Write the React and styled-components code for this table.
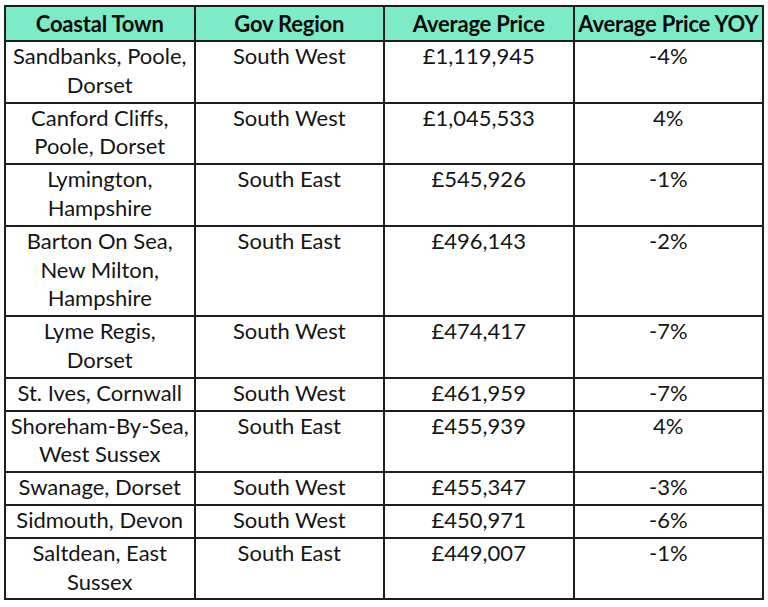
import React from "react";
import styled, { createGlobalStyle } from "styled-components";

const Global = createGlobalStyle`
  html, body { margin: 0; padding: 0; background: #ffffff; }
  body { font-family: "Lato", "Liberation Sans", sans-serif; color: #111; }
`;

const Page = styled.div`
  padding: 5px 0 0 4px;
`;

const Table = styled.table`
  width: 760px;
  table-layout: fixed;
  border-collapse: collapse;
  border: 2px solid #1e1e1e;
  font-family: "Lato", "Liberation Sans", sans-serif;
`;

const HeadCell = styled.th`
  background: #7eebc8;
  border: 2px solid #1e1e1e;
  font-size: 22px;
  font-weight: 700;
  line-height: 29px;
  padding: 2px 0 2px;
  text-align: center;
  white-space: nowrap;
  letter-spacing: -0.2px;
  color: #0c0c0c;
`;

const Cell = styled.td`
  border: 2px solid #1e1e1e;
  font-size: 22px;
  font-weight: 400;
  line-height: 28.8px;
  padding: 0 4px 2px;
  text-align: center;
  vertical-align: top;
  color: #151515;
`;

const rows = [
  ["Sandbanks, Poole, Dorset", "South West", "£1,119,945", "-4%"],
  ["Canford Cliffs, Poole, Dorset", "South West", "£1,045,533", "4%"],
  ["Lymington, Hampshire", "South East", "£545,926", "-1%"],
  ["Barton On Sea, New Milton, Hampshire", "South East", "£496,143", "-2%"],
  ["Lyme Regis, Dorset", "South West", "£474,417", "-7%"],
  ["St. Ives, Cornwall", "South West", "£461,959", "-7%"],
  ["Shoreham-By-Sea, West Sussex", "South East", "£455,939", "4%"],
  ["Swanage, Dorset", "South West", "£455,347", "-3%"],
  ["Sidmouth, Devon", "South West", "£450,971", "-6%"],
  ["Saltdean, East Sussex", "South East", "£449,007", "-1%"],
];

export default function App() {
  return (
    <>
      <Global />
      <Page>
        <Table>
          <thead>
            <tr>
              <HeadCell>Coastal Town</HeadCell>
              <HeadCell>Gov Region</HeadCell>
              <HeadCell>Average Price</HeadCell>
              <HeadCell>Average Price YOY</HeadCell>
            </tr>
          </thead>
          <tbody>
            {rows.map((r) => (
              <tr key={r[0]}>
                {r.map((c, i) => (
                  <Cell key={i}>{c}</Cell>
                ))}
              </tr>
            ))}
          </tbody>
        </Table>
      </Page>
    </>
  );
}
